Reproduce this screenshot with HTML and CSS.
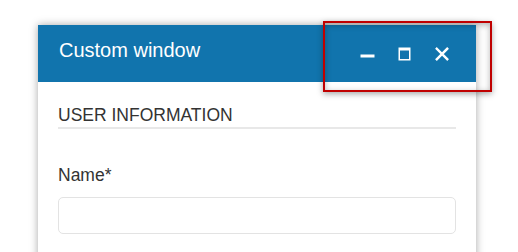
FILE: index.html
```html
<!DOCTYPE html>
<html lang="en">
<head>
    <meta charset="UTF-8">
    <meta name="viewport" content="width=device-width, initial-scale=1.0">
    <title>Custom window</title>
    <link rel="stylesheet" href="styles.css">
</head>
<body>

    <div class="window">
        <div class="window-header">
            <span class="window-title">Custom window</span>
            <div class="window-actions">
                <button class="window-button" title="Minimize">
                    <svg width="16" height="16" viewBox="0 0 16 16"><rect x="0.5" y="8.5" width="14" height="3" fill="#fff"/></svg>
                </button>
                <button class="window-button" title="Maximize">
                    <svg width="16" height="16" viewBox="0 0 16 16"><path fill="#fff" fill-rule="evenodd" d="M1.5 1.5H13.5V14.5H1.5Z M3 4.5V13H12V4.5Z"/></svg>
                </button>
                <button class="window-button" title="Close">
                    <svg width="16" height="16" viewBox="0 0 16 16"><path d="M2.8 2.8L13.2 13.2M13.2 2.8L2.8 13.2" stroke="#fff" stroke-width="2.4" stroke-linecap="square"/></svg>
                </button>
            </div>
        </div>

        <div class="window-content">
            <div class="section-title">USER INFORMATION</div>

            <label class="field-label" for="name">Name*</label>
            <input type="text" class="field-input" id="name">
        </div>
    </div>

    <!-- highlight around the window buttons -->
    <div class="highlight"></div>

</body>
</html>
```

FILE: styles.css
```css
body {
    margin: 0;
    padding: 25px 0 0 38px;
    background: #ffffff;
    font-family: 'Liberation Sans', Arial, sans-serif;
    overflow: hidden;
}

.window {
    width: 438px;
    min-height: 320px;
    background: #ffffff;
    box-shadow: 0 0 8px rgba(0, 0, 0, 0.35);
}

.window-header {
    height: 57px;
    background-color: #1174ad;
    display: flex;
    align-items: center;
    justify-content: space-between;
    padding: 0 16px 0 21px;
}

.window-title {
    color: #ffffff;
    font-size: 20px;
    line-height: 20px;
    margin-bottom: 7px;
}

.window-actions {
    display: flex;
}

.window-button {
    width: 37px;
    height: 37px;
    padding: 0;
    border: none;
    background: none;
    display: flex;
    align-items: center;
    justify-content: center;
    cursor: pointer;
}

.window-content {
    padding: 23px 20px 21px;
}

.section-title {
    font-size: 17.5px;
    line-height: 20px;
    color: #333333;
    padding-bottom: 2px;
    border-bottom: 2px solid #e8e8e8;
    margin-bottom: 36px;
}

.field-label {
    display: block;
    font-size: 17.5px;
    line-height: 20px;
    color: #333333;
    margin-bottom: 12px;
}

.field-input {
    display: block;
    box-sizing: border-box;
    width: 398px;
    height: 37px;
    border: 1px solid #e3e3e3;
    border-radius: 5px;
    outline: none;
    font-size: 16px;
}

.highlight {
    position: absolute;
    left: 323px;
    top: 21px;
    width: 165px;
    height: 67px;
    border: 2px solid #c00000;
    box-shadow: 0 2px 6px rgba(0, 0, 0, 0.35), inset 0 2px 6px rgba(0, 0, 0, 0.3);
}
```
